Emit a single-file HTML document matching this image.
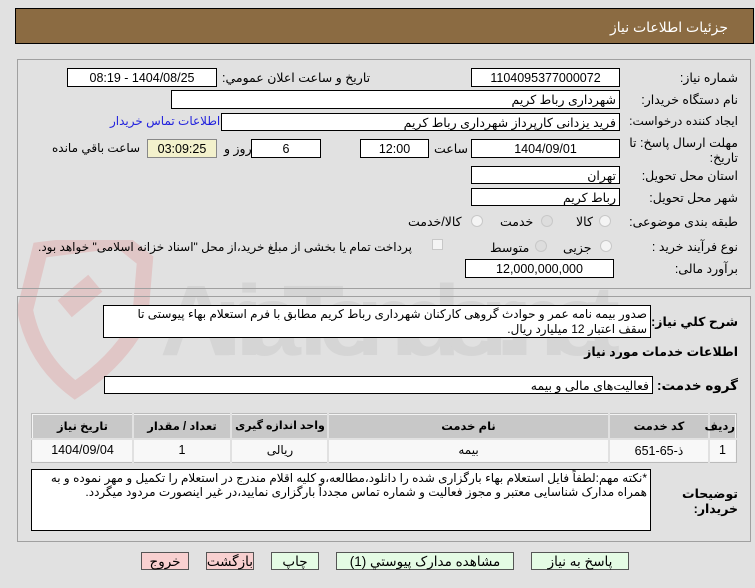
<!DOCTYPE html>
<html><head><meta charset="utf-8">
<style>
*{margin:0;padding:0;box-sizing:border-box}
body{width:755px;height:588px;background:#e1e1e1;font-family:"Liberation Sans","DejaVu Sans",sans-serif;font-size:12.5px;color:#000;position:relative;overflow:hidden}
.a{position:absolute;white-space:nowrap}
.box{position:absolute;background:#fff;border:1px solid #000;direction:rtl;text-align:right;padding:1px 3px;font-size:12.5px;line-height:16px}
.lbl{position:absolute;direction:rtl;white-space:nowrap;text-align:right}
.rad{position:absolute;width:12px;height:12px;border-radius:50%;border:1px solid #c8c8c8;background:#f4f4f4}
.btn{position:absolute;border:1px solid #555;text-align:center;font-size:13.5px;line-height:17px;direction:rtl}
.th{font-weight:bold;font-size:11.5px}
</style></head><body>
<svg class="a" style="left:0;top:240px;opacity:.4" width="760" height="160">
<path d="M40 10 L120 0 L145 20 L140 80 Q120 120 75 150 Q35 120 25 70 Z" fill="none" stroke="#e0a0a0" stroke-width="16"/>
<rect x="60" y="45" width="40" height="22" fill="#e0a0a0" transform="rotate(-40 80 56)"/>
<text x="160" y="115" font-family="Liberation Sans" font-size="100" font-weight="bold" fill="#c4c4c4" textLength="460">AriaTender.net</text>
</svg>
<div class="a" style="left:15px;top:8px;width:739px;height:36px;background:#8b6b42;border:1px solid #000"></div>
<div class="lbl" style="right:27px;top:19px;color:#fff;font-size:14px">جزئيات اطلاعات نياز</div>

<div class="a" style="left:17px;top:59px;width:734px;height:230px;border:1px solid #a0a0a0"></div>
<div class="a" style="left:17px;top:296px;width:734px;height:246px;border:1px solid #a0a0a0"></div>

<div class="lbl" style="right:17px;top:70px">شماره نياز:</div>
<div class="box" style="left:471px;top:68px;width:149px;height:19px;text-align:center">1104095377000072</div>
<div class="lbl" style="left:222px;top:70px">تاريخ و ساعت اعلان عمومي:</div>
<div class="box" style="left:67px;top:68px;width:150px;height:19px;text-align:center">1404/08/25 - 08:19</div>

<div class="lbl" style="right:17px;top:92px">نام دستگاه خريدار:</div>
<div class="box" style="left:171px;top:90px;width:449px;height:19px">شهرداری رباط کریم</div>

<div class="lbl" style="right:17px;top:114px;font-size:12px">ايجاد کننده درخواست:</div>
<div class="box" style="left:221px;top:113px;width:399px;height:18px">فرید یزدانی کارپرداز شهرداری رباط کریم</div>
<div class="lbl" style="left:110px;top:114px;color:#2222dd;font-size:12px">اطلاعات تماس خريدار</div>

<div class="lbl" style="right:17px;top:135px">مهلت ارسال پاسخ: تا</div>
<div class="lbl" style="right:17px;top:150px">تاريخ:</div>
<div class="box" style="left:471px;top:139px;width:149px;height:19px;text-align:center">1404/09/01</div>
<div class="lbl" style="left:434px;top:141px">ساعت</div>
<div class="box" style="left:360px;top:139px;width:69px;height:19px;text-align:center">12:00</div>
<div class="box" style="left:251px;top:139px;width:70px;height:19px;text-align:center">6</div>
<div class="lbl" style="left:224px;top:141px">روز و</div>
<div class="box" style="left:147px;top:139px;width:70px;height:19px;text-align:center;background:#f3f1cc;border-color:#888">03:09:25</div>
<div class="lbl" style="left:52px;top:141px;font-size:12px">ساعت باقي مانده</div>

<div class="lbl" style="right:17px;top:168px">استان محل تحويل:</div>
<div class="box" style="left:471px;top:166px;width:149px;height:18px">تهران</div>
<div class="lbl" style="right:17px;top:190px">شهر محل تحويل:</div>
<div class="box" style="left:471px;top:188px;width:149px;height:18px">رباط کریم</div>

<div class="lbl" style="right:17px;top:214px">طبقه بندی موضوعی:</div>
<div class="rad" style="left:599px;top:215px"></div><div class="lbl" style="left:576px;top:214px">کالا</div>
<div class="rad" style="left:541px;top:215px;background:#ddd"></div><div class="lbl" style="left:500px;top:214px">خدمت</div>
<div class="rad" style="left:471px;top:215px"></div><div class="lbl" style="left:408px;top:214px">کالا/خدمت</div>

<div class="lbl" style="right:17px;top:239px">نوع فرآیند خرید :</div>
<div class="rad" style="left:600px;top:240px"></div><div class="lbl" style="left:563px;top:240px">جزیی</div>
<div class="rad" style="left:535px;top:240px;background:#ddd"></div><div class="lbl" style="left:490px;top:240px">متوسط</div>
<div class="a" style="left:432px;top:239px;width:11px;height:11px;border:1px solid #c8c8c8;background:#f4f4f4"></div>
<div class="lbl" style="left:38px;top:240px;font-size:12px">پرداخت تمام یا بخشی از مبلغ خرید،از محل "اسناد خزانه اسلامی" خواهد بود.</div>

<div class="lbl" style="right:17px;top:261px">برآورد مالی:</div>
<div class="box" style="left:465px;top:259px;width:149px;height:19px;text-align:center">12,000,000,000</div>

<div class="lbl" style="right:17px;top:314px;font-weight:bold">شرح کلي نياز:</div>
<div class="box" style="left:103px;top:305px;width:548px;height:33px;white-space:normal;line-height:15px;font-size:12px;letter-spacing:-0.2px">صدور بیمه نامه عمر و حوادث گروهی کارکنان شهرداری رباط کریم مطابق با فرم استعلام بهاء پیوستی تا سقف اعتبار 12 میلیارد ریال.</div>

<div class="lbl" style="right:17px;top:344px;font-weight:bold">اطلاعات خدمات مورد نياز</div>
<div class="lbl" style="right:17px;top:378px;font-weight:bold;font-size:13.5px">گروه خدمت:</div>
<div class="box" style="left:104px;top:376px;width:549px;height:18px">فعالیت‌های مالی و بیمه</div>

<div class="a" style="left:31px;top:413px;width:706px;height:50px;border:1px solid #bbb;background:#f4f4f4"></div>
<div class="a" style="left:33px;top:415px;width:702px;height:23px;background:#c8c8c8"></div>
<div class="a" style="left:33px;top:440px;width:702px;height:21px;background:#f8f8f8"></div>
<div class="a" style="left:708px;top:413px;width:2px;height:50px;background:#e1e1e1"></div>
<div class="a" style="left:608px;top:413px;width:2px;height:50px;background:#e1e1e1"></div>
<div class="a" style="left:327px;top:413px;width:2px;height:50px;background:#e1e1e1"></div>
<div class="a" style="left:230px;top:413px;width:2px;height:50px;background:#e1e1e1"></div>
<div class="a" style="left:132px;top:413px;width:2px;height:50px;background:#e1e1e1"></div>
<div class="a" style="left:31px;top:438px;width:706px;height:2px;background:#e1e1e1"></div>
<div class="lbl th" style="left:710px;width:25px;top:419px;text-align:center">رديف</div>
<div class="lbl th" style="left:610px;width:98px;top:419px;text-align:center">کد خدمت</div>
<div class="lbl th" style="left:329px;width:279px;top:419px;text-align:center">نام خدمت</div>
<div class="lbl th" style="left:232px;width:96px;top:419px;text-align:center;font-size:11px">واحد اندازه گيری</div>
<div class="lbl th" style="left:134px;width:96px;top:419px;text-align:center">تعداد / مقدار</div>
<div class="lbl th" style="left:33px;width:99px;top:419px;text-align:center">تاريخ نياز</div>
<div class="lbl" style="left:710px;width:25px;top:443px;text-align:center">1</div>
<div class="lbl" style="left:610px;width:98px;top:443px;text-align:center">ذ-65-651</div>
<div class="lbl" style="left:329px;width:279px;top:443px;text-align:center;font-size:12px">بیمه</div>
<div class="lbl" style="left:232px;width:96px;top:443px;text-align:center;font-size:12px">ریالی</div>
<div class="lbl" style="left:134px;width:96px;top:443px;text-align:center">1</div>
<div class="lbl" style="left:33px;width:99px;top:443px;text-align:center">1404/09/04</div>

<div class="lbl" style="right:17px;top:486px;font-weight:bold">توضيحات</div>
<div class="lbl" style="right:17px;top:501px;font-weight:bold">خريدار:</div>
<div class="box" style="left:31px;top:469px;width:620px;height:62px;white-space:normal;line-height:14px;font-size:12px">*نکته مهم:لطفاً فایل استعلام بهاء بارگزاری شده را دانلود،مطالعه،و کلیه اقلام مندرج در استعلام را تکمیل و مهر نموده و به همراه مدارک شناسایی معتبر و مجوز فعالیت و شماره تماس مجدداً بارگزاری نمایید،در غیر اینصورت مردود میگردد.</div>

<div class="btn" style="left:531px;top:552px;width:98px;height:18px;background:#e4fbe4">پاسخ به نياز</div>
<div class="btn" style="left:336px;top:552px;width:178px;height:18px;background:#e4fbe4">مشاهده مدارک پيوستي (1)</div>
<div class="btn" style="left:271px;top:552px;width:48px;height:18px;background:#e4fbe4">چاپ</div>
<div class="btn" style="left:206px;top:552px;width:48px;height:18px;background:#f8d0d0">بازگشت</div>
<div class="btn" style="left:141px;top:552px;width:48px;height:18px;background:#f8d0d0">خروج</div>
</body></html>
